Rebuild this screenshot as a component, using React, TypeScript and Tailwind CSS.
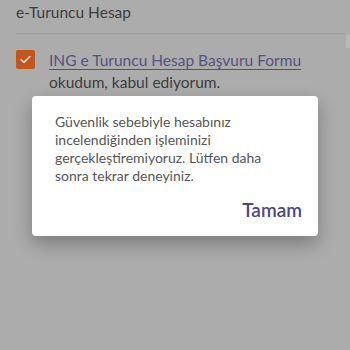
import React from 'react'

const font = { fontFamily: 'Lato, "Noto Sans", sans-serif' }

const App: React.FC = () => {
    return (
        <div className="relative h-[350px] w-[350px] overflow-hidden bg-[#acacac]" style={font}>
            <div className="pl-4">
                <p className="text-[15.5px] leading-[24px] text-[#3d3d3d]">e-Turuncu Hesap</p>
                <div className="mt-[9px] flex h-px items-start">
                    <div className="h-px flex-1 bg-[#9c9c9c]"></div>
                    <div className="ml-[1px] mt-[1px] h-[14px] w-[4px] shrink-0 rounded-tl-sm bg-[#b9b9b9]"></div>
                </div>
                <div className="mt-[16px] flex items-start gap-[14px]">
                    <div className="flex h-[19px] w-[19px] shrink-0 items-center justify-center rounded-[2px] bg-[#c3561c]">
                        <svg width="13" height="13" viewBox="0 0 24 24" fill="none" stroke="#f3e6dc" strokeWidth="3" strokeLinecap="round" strokeLinejoin="round">
                            <path d="M4 12.5l5 5L20 6.5" />
                        </svg>
                    </div>
                    <div className="-mt-[1px] text-[15.5px] leading-[22px] text-[#3d3d3d]">
                        <p className="text-[#57527c] underline decoration-1 underline-offset-[3px]">ING e Turuncu Hesap Başvuru Formu</p>
                        <p>okudum, kabul ediyorum.</p>
                    </div>
                </div>
            </div>

            <div className="absolute left-[32px] top-[96px] w-[286px] rounded-[4px] bg-white pb-[14px] pl-[23px] pr-[16px] pt-[17px] shadow-[0_8px_18px_rgba(0,0,0,0.28)]">
                <p className="pr-[17px] text-[14px] leading-[18px] text-[#565656]">
                    Güvenlik sebebiyle hesabınız incelendiğinden işleminizi gerçekleştiremiyoruz. Lütfen daha sonra tekrar deneyiniz.
                </p>
                <div className="mt-[13px] flex justify-end">
                    <span className="text-[19px] font-semibold leading-[24px] text-[#4b4787]">Tamam</span>
                </div>
            </div>
        </div>
    )
}

export default App
